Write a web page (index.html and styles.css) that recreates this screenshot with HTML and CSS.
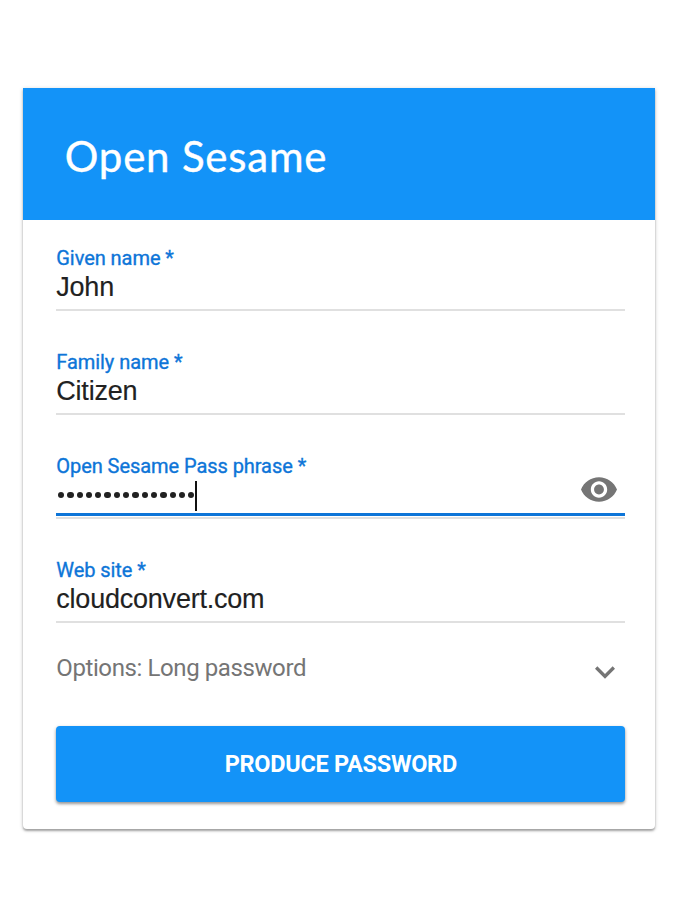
FILE: index.html
```html
<!DOCTYPE html>
<html lang="en">
<head>
<meta charset="utf-8">
<title>Open Sesame</title>
<link rel="stylesheet" href="styles.css">
</head>
<body>
<main class="card">
  <header class="header"><h1>Open Sesame</h1></header>
  <form class="form">
    <div class="field"><span class="label">Given name *</span><span class="value">John</span></div>
    <div class="field"><span class="label">Family name *</span><span class="value">Citizen</span></div>
    <div class="field focused"><span class="label">Open Sesame Pass phrase *</span>
      <div class="value secret">
        <span class="dots"><i></i><i></i><i></i><i></i><i></i><i></i><i></i><i></i><i></i><i></i><i></i><i></i><i></i><i></i><i></i></span><span class="caret"></span>
        <svg class="eye" viewBox="1 4.5 22 15"><path d="M12 4.5C7 4.5 2.73 7.61 1 12c1.73 4.39 6 7.5 11 7.5s9.27-3.11 11-7.5c-1.73-4.39-6-7.5-11-7.5zM12 17c-2.76 0-5-2.24-5-5s2.24-5 5-5 5 2.24 5 5-2.24 5-5 5zm0-8c-1.66 0-3 1.34-3 3s1.34 3 3 3 3-1.34 3-3-1.34-3-3-3z"/></svg>
      </div>
    </div>
    <div class="field"><span class="label">Web site *</span><span class="value">cloudconvert.com</span></div>
    <div class="options"><span>Options: Long password</span>
      <svg class="chevron" viewBox="6 8.59 12 7.41"><path d="M16.59 8.59L12 13.17 7.41 8.59 6 10l6 6 6-6z"/></svg>
    </div>
    <button class="button" type="button">PRODUCE PASSWORD</button>
  </form>
</main>
</body>
</html>
```
FILE: styles.css
```css
* { box-sizing: border-box; }
body { margin: 0; min-height: 920px; padding: 88px 24px 0 23.3px; background: #fff; font-family: Roboto, sans-serif; }
.card { height: 741px; width: 632px; background: #fff; border-radius: 0 0 4px 4px; box-shadow: 0 2px 2px rgba(0,0,0,.27), 0 1px 4px rgba(0,0,0,.2); }
.header { height: 132px; padding: 44px 41.5px; background: #1393f8; color: #fff; }
h1 { margin: 0; font: 400 42px/48px Lato, sans-serif; letter-spacing: .8px; -webkit-text-stroke: .4px #fff; }
.form { padding: 26px 30px 0 33px; }
.field { height: 65px; margin-bottom: 39.1px; border-bottom: 2px solid #e0e0e0; }
.label { display: block; width: max-content; height: 24px; font-size: 20px; line-height: 24px; letter-spacing: -.06px; color: #0d75d8; -webkit-text-stroke: .35px; }
.value { display: flex; height: 35px; font: 27px/35px "Liberation Sans", sans-serif; letter-spacing: -.22px; color: #212121; -webkit-text-stroke: .15px; }
.focused { position: relative; }
.focused::after { content: ""; position: absolute; left: 0; right: 0; bottom: 1px; height: 3px; background: #0d75d8; }
.secret { align-items: center; }
.dots { display: flex; gap: 3px; padding-left: 1.7px; margin-top: -1px; }
.dots i { width: 6.3px; height: 6.3px; border-radius: 50%; background: #212121; }
.caret { width: 2px; height: 30px; margin-left: 1px; background: #111; }
.eye { width: 36px; height: 25px; margin: -12px 8.5px 0 auto; fill: #757575; }
.options { display: flex; justify-content: space-between; align-items: center; height: 30px; margin-top: -9px; padding-right: 10px; font-size: 24px; letter-spacing: -.4px; color: #757575; }
.chevron { width: 20px; height: 13px; margin-top: 8px; fill: #757575; }
.button { display: block; width: 100%; height: 76px; margin-top: 42.4px; border: 0; border-radius: 4px; background: #1393f8; color: #fff; font: 700 23.5px Roboto, sans-serif; letter-spacing: -.28px; box-shadow: 0 2px 3px rgba(0,0,0,.35), 0 1px 4px rgba(0,0,0,.12); }
```
